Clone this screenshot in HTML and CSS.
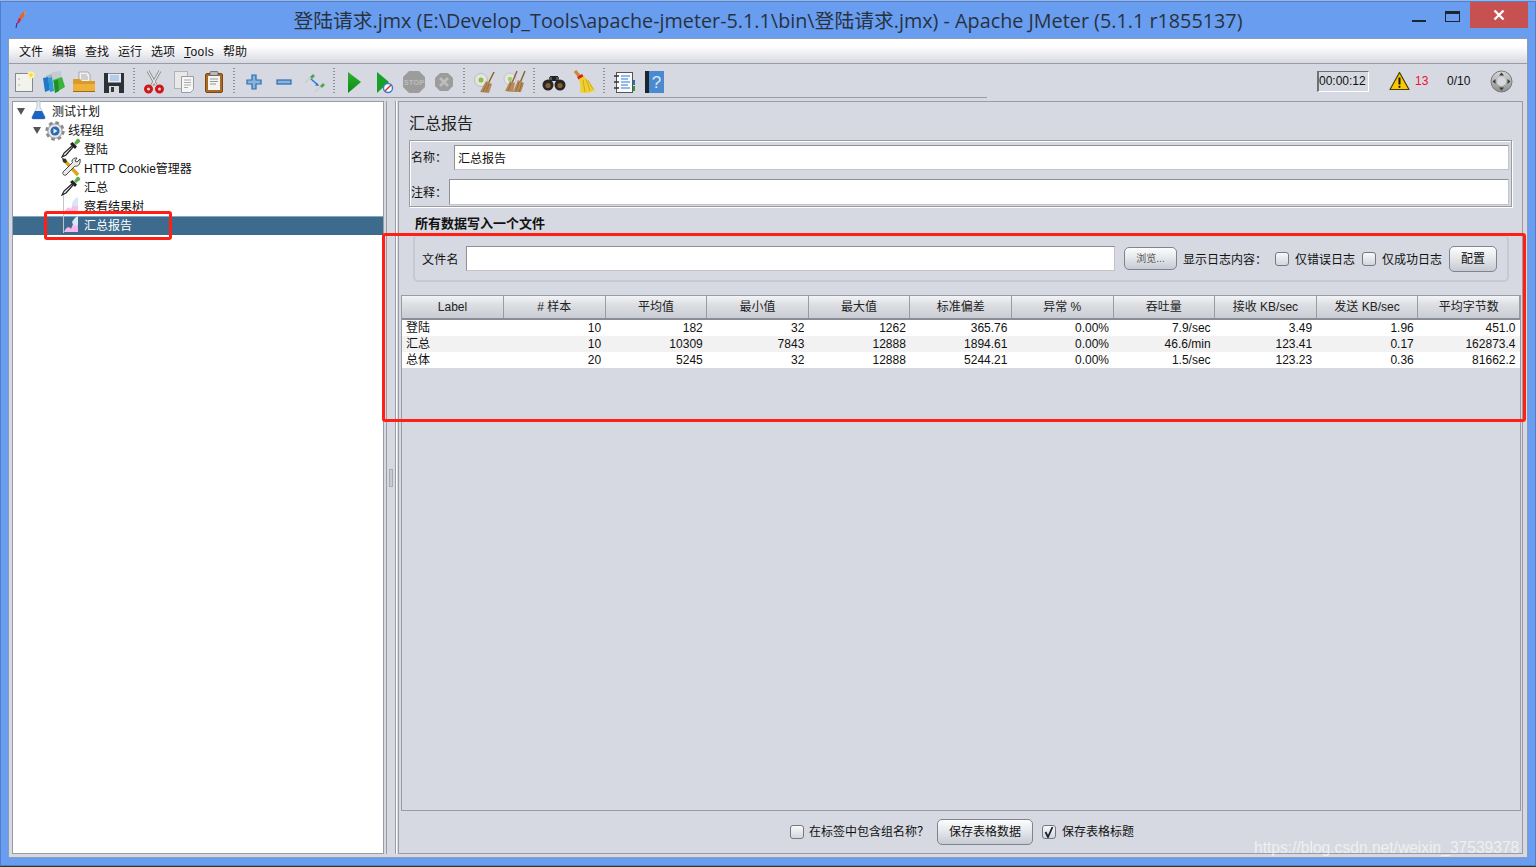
FILE: index.html
```html
<!DOCTYPE html>
<html lang="zh-CN">
<head>
<meta charset="utf-8">
<title>登陆请求.jmx - Apache JMeter</title>
<link rel="stylesheet" href="styles.css">
</head>
<body>
<div class="desktop">
  <div class="window">
    <header class="titlebar">
      <svg class="app-icon" width="14" height="20" viewBox="0 0 14 20"><path d="M12 1C8 2 5 6 4 11l3-1c2-2 4-5 5-9z" fill="#e8622a"/><path d="M5 8c-1 2-2 4-2 6l3-2 1-3z" fill="#c22a5c"/><path d="M3 13l-1 5" stroke="#5a2a7a" stroke-width="1.2"/><path d="M11 1l1 1-2 4z" fill="#f5b030"/></svg>
      <div class="title">登陆请求.jmx (E:\Develop_Tools\apache-jmeter-5.1.1\bin\登陆请求.jmx) - Apache JMeter (5.1.1 r1855137)</div>
      <div class="controls">
        <span class="ctl-min"></span>
        <span class="ctl-max"></span>
        <span class="ctl-close"><svg width="12" height="12" viewBox="0 0 12 12"><path d="M1.5 1.5l9 9M10.500 1.500l-9 9" stroke="#fff" stroke-width="2.400"/></svg></span>
      </div>
    </header>
    <div class="client">
      <nav class="menubar">
        <span>文件</span><span>编辑</span><span>查找</span><span>运行</span><span>选项</span><span class="menu-latin"><u>T</u>ools</span><span>帮助</span>
      </nav>
      <div class="toolbar">
        <div class="tools">
          <button class="tool"><svg width="24" height="24" viewBox="0 0 24 24"><rect x="3.500" y="3.500" width="17" height="18" fill="#f3f3ee" stroke="#85888a"/><circle cx="7" cy="9" r=".7" fill="#999"/><circle cx="7" cy="15" r=".7" fill="#999"/><circle cx="19" cy="5" r="3.500" fill="#fff3a0"/><circle cx="19" cy="5" r="1.800" fill="#f8d848"/></svg></button>
          <button class="tool"><svg width="24" height="24" viewBox="0 0 24 24"><path d="M4 6l8-3v8l-8 3z" fill="#a8b4bc"/><path d="M10 2l9-1 1 10-10 2z" fill="#c4ccd2"/><path d="M1 8l5-1 2 13-5 2z" fill="#1f78c8"/><path d="M6 8l4-1 2 14-4 1z" fill="#2a9ad8"/><path d="M11 10l9-3 3 10-10 6z" fill="#3cb43c"/><path d="M12 11l4-1.500 1 11.500-4 2z" fill="#1e8e2a"/></svg></button>
          <button class="tool"><svg width="24" height="24" viewBox="0 0 24 24"><path d="M7 2h9l2 3v9H7z" fill="#f2f2f2" stroke="#9a9a9a" stroke-width=".8"/><path d="M9 5h6M9 7h7M9 9h7" stroke="#aaa"/><path d="M1 9h7l2 2h13v10a1 1 0 0 1-1 1H2a1 1 0 0 1-1-1z" fill="#d99a28"/><path d="M1 14h22v7a1 1 0 0 1-1 1H2a1 1 0 0 1-1-1z" fill="#eeb23c"/><path d="M1 21h22v1H1z" fill="#9c6a18"/></svg></button>
          <button class="tool"><svg width="24" height="24" viewBox="0 0 24 24"><path d="M2 3h20v20H2z" fill="#2d3236"/><rect x="6" y="3.500" width="13" height="9" fill="#e2eaf3"/><path d="M8 6h9M8 8h9M8 10h9" stroke="#8db0d4"/><rect x="7" y="16" width="10" height="7" fill="#d8dadc"/><rect x="9" y="17" width="3" height="5" fill="#34383c"/></svg></button>
          <span class="tool-sep"></span>
          <button class="tool"><svg width="24" height="24" viewBox="0 0 24 24"><path d="M6 1l8 14M18 1l-8 14" stroke="#8d8d8d" stroke-width="3"/><path d="M6 1l8 14M18 1l-8 14" stroke="#ededed" stroke-width="1.200"/><circle cx="6.500" cy="19" r="3" fill="none" stroke="#d01818" stroke-width="3"/><circle cx="17.500" cy="19" r="3" fill="none" stroke="#d01818" stroke-width="3"/></svg></button>
          <button class="tool"><svg width="24" height="24" viewBox="0 0 24 24"><rect x="2.500" y="1.500" width="13" height="17" fill="#e8e8e8" stroke="#b4b4b4"/><path d="M9.500 6.500h12v13l-3 3h-9z" fill="#f6f6f6" stroke="#9c9c9c"/><path d="M12 10h7M12 12.500h7M12 15h7M12 17.500h4" stroke="#aaa"/></svg></button>
          <button class="tool"><svg width="24" height="24" viewBox="0 0 24 24"><rect x="3.500" y="3.500" width="17" height="19" rx="1.500" fill="#a86a24" stroke="#7a4a14"/><rect x="6" y="6" width="12" height="14" fill="#f4f4f0"/><path d="M8 9h8M8 11.500h8M8 14h6" stroke="#999"/><rect x="8" y="1.500" width="8" height="4" rx="1" fill="#b8b8b8" stroke="#555" stroke-width=".7"/></svg></button>
          <span class="tool-sep"></span>
          <button class="tool"><svg width="24" height="24" viewBox="0 0 24 24"><path d="M10 5h4v5h5v4h-5v5h-4v-5H5v-4h5z" fill="#8ab4dc" stroke="#2a6cb0" stroke-width="1.200"/></svg></button>
          <button class="tool"><svg width="24" height="24" viewBox="0 0 24 24"><rect x="5" y="10" width="14" height="4" fill="#8ab4dc" stroke="#2a6cb0" stroke-width="1.200"/></svg></button>
          <button class="tool"><svg width="24" height="24" viewBox="0 0 24 24"><path d="M3 13l7-7M13 22l7-7" stroke="#d0d0d0" stroke-width="2"/><path d="M8 7l3-3 2 2-3 3z" fill="#58a058"/><path d="M18 16l3-3 2 2-3 3z" fill="#58a058"/><path d="M9 9l7 6" stroke="#2a78d8" stroke-width="1.500"/><path d="M17 16l-4-.500 2-2.500z" fill="#2a78d8"/></svg></button>
          <span class="tool-sep"></span>
          <button class="tool"><svg width="24" height="24" viewBox="0 0 24 24"><path d="M6 2l13 10L6 23z" fill="url(#playA)"/><defs><linearGradient id="playA" x1="0" y1="0" x2="0" y2="1"><stop offset="0" stop-color="#30b030"/><stop offset="1" stop-color="#0c8a18"/></linearGradient></defs></svg></button>
          <button class="tool"><svg width="24" height="24" viewBox="0 0 24 24"><path d="M5 2l12 10L5 23z" fill="#18a028"/><circle cx="16" cy="18" r="4.500" fill="#fff" stroke="#3a7ad0" stroke-width="1.400"/><path d="M13 21l6-6" stroke="#d03030" stroke-width="1.400"/></svg></button>
          <button class="tool"><svg width="24" height="24" viewBox="0 0 24 24"><path d="M7 1h10l6 6v10l-6 6H7l-6-6V7z" fill="#9c9c9c"/><text class="stop-text" x="12" y="15">STOP</text></svg></button>
          <button class="tool"><svg width="24" height="24" viewBox="0 0 24 24"><path d="M8 3h8l5 5v8l-5 5H8l-5-5V8z" fill="#9c9c9c"/><path d="M8 8l8 8M16 8l-8 8" stroke="#bdbdbd" stroke-width="2.600"/></svg></button>
          <span class="tool-sep"></span>
          <button class="tool"><svg width="24" height="24" viewBox="0 0 24 24"><circle cx="9" cy="10" r="6.500" fill="#e4e4e2" stroke="#bcbcbc"/><circle cx="9" cy="10" r="2.500" fill="#84c440"/><path d="M22 2l-6 12" stroke="#8a6438" stroke-width="1.600"/><path d="M14 11l6 3-3 9-9-1z" fill="#b48a5a"/><path d="M11 22l4-9M14 22l3-8" stroke="#8a6438" stroke-width=".8"/></svg></button>
          <button class="tool"><svg width="24" height="24" viewBox="0 0 24 24"><circle cx="8" cy="9" r="6" fill="#e4e4e2" stroke="#c4c4c4"/><circle cx="8" cy="9" r="2.200" fill="#a4d070"/><path d="M15 1l-5 12M23 1l-5 12" stroke="#8a6438" stroke-width="1.500"/><path d="M8 11l5 2-2 9-8-1z" fill="#b48a5a"/><path d="M16 10l6 3-3 9-8 0z" fill="#b48a5a"/><path d="M14 21l3-9M17 22l3-9M6 21l3-8" stroke="#8a6438" stroke-width=".8"/></svg></button>
          <span class="tool-sep"></span>
          <button class="tool"><svg width="24" height="24" viewBox="0 0 24 24"><rect x="8" y="6" width="8" height="5" fill="#222"/><path d="M7 7h3v3H7zM14 7h3v3h-3z" fill="#555"/><circle cx="6" cy="15" r="5.500" fill="#262626"/><circle cx="18" cy="15" r="5.500" fill="#262626"/><circle cx="6" cy="15.500" r="2.600" fill="#8a5a30"/><circle cx="18" cy="15.500" r="2.600" fill="#8a5a30"/></svg></button>
          <button class="tool"><svg width="24" height="24" viewBox="0 0 24 24"><path d="M3 1l5 6" stroke="#c88a3a" stroke-width="3.400"/><path d="M5 7l5-3 2 3-5 3z" fill="#d82020"/><path d="M7 9l5-3 11 14c-5 3-10 4-15 2 1-4 0-9-1-13z" fill="#f0d030"/><path d="M11 10l2 12M14 9l4 12M16 10l5 9" stroke="#c0a018" stroke-width=".8"/></svg></button>
          <span class="tool-sep"></span>
          <button class="tool"><svg width="24" height="24" viewBox="0 0 24 24"><rect x="4.500" y="2.500" width="16" height="20" fill="#fafafa" stroke="#555"/><path d="M2 6h5M2 12h5M2 18h5" stroke="#333" stroke-width="1.500"/><path d="M9 6h9M9 9h7M9 12h9M9 15h7M9 18h9" stroke="#2a7ae0" stroke-width="1.200"/><path d="M21 10h2v5h-2z" fill="#2a70c0"/><path d="M21 16h2v5h-2z" fill="#2a9a3a"/></svg></button>
          <button class="tool"><svg width="24" height="24" viewBox="0 0 24 24"><path d="M3 1h19v22H3z" fill="#4c8ad0"/><path d="M3 1h4v22H3z" fill="#1c2630"/><text class="help-text" x="14.500" y="18">?</text></svg></button>
        </div>
        <div class="status">
          <span class="timer">00:00:12</span>
          <svg class="warn" width="21" height="20" viewBox="0 0 21 20"><path d="M10.500 1.500L20 18.500H1z" fill="#f8c800" stroke="#4a3c00" stroke-width="1.200" stroke-linejoin="round"/><path d="M10.500 6.500v7" stroke="#111" stroke-width="2"/><circle cx="10.500" cy="15.800" r="1.100" fill="#111"/></svg>
          <span class="warn-count">13</span>
          <span class="threads">0/10</span>
          <svg class="expand" width="23" height="23" viewBox="0 0 23 23"><defs><linearGradient id="ball" x1="0" y1="0" x2="0" y2="1"><stop offset="0" stop-color="#d8d8d8"/><stop offset="1" stop-color="#8e8e8e"/></linearGradient></defs><circle cx="11.500" cy="11.500" r="10.500" fill="url(#ball)" stroke="#777"/><circle cx="11.500" cy="11.500" r="4.500" fill="#d6d9e0"/><path d="M11.500 2.500l2.500 3h-5zM11.500 20.500l2.500-3h-5zM2.500 11.500l3 2.500v-5zM20.500 11.500l-3 2.500v-5z" fill="#3c3c3c"/></svg>
        </div>
      </div>
      <main class="main">
        <aside class="tree">
          <div class="node depth-0"><i class="twisty"></i><svg class="node-icon" width="16" height="20" viewBox="0 0 16 20"><path d="M6 1h3v6l5 10c.4 1-.2 2-1 2H2c-.8 0-1.400-1-1-2l5-10z" fill="#e8ecf2" stroke="#aab2bc" stroke-width=".7"/><path d="M4 11h7l3 6c.4 1-.2 2-1 2H2c-.8 0-1.400-1-1-2z" fill="#1c64c0"/></svg><span>测试计划</span></div>
          <div class="node depth-1"><i class="twisty"></i><svg class="node-icon" width="20" height="20" viewBox="0 0 20 20"><circle cx="10" cy="10" r="8" fill="#cfcfcf" stroke="#8c8c8c" stroke-width="3.400" stroke-dasharray="3.500 2.800"/><circle cx="10" cy="10" r="7" fill="#e8e8e8" stroke="#8c8c8c" stroke-width=".6"/><circle cx="10" cy="10" r="4.500" fill="#2a68b0"/><path d="M8.500 7.500l4 2.500-4 2.500z" fill="#e8f0fa"/></svg><span>线程组</span></div>
          <div class="node depth-2"><svg class="node-icon" width="20" height="20" viewBox="0 0 20 20"><path d="M12 7L3 15l-2 4 4-2 8-9z" fill="#ececec" stroke="#222" stroke-width="1.200"/><path d="M9 6l5 5 2-2.500-4.500-4.500z" fill="#222"/><path d="M13 5l3-4c1.500-1 4 1.500 3 3l-4 3z" fill="#5cb04c"/></svg><span>登陆</span></div>
          <div class="node depth-2"><svg class="node-icon" width="20" height="20" viewBox="0 0 20 20"><path d="M3 3l14 15" stroke="#d8a818" stroke-width="3.400"/><path d="M1 1l4 1 1 3-2 1-2-1z" fill="#333"/><path d="M19 2l-3 3-2-1 2-3c-2-.500-5 1-5 3 0 .800 0 1 .5 1.500L2 15c-1 2 1 4 3 3l9-9c2 1 6-1 5-7z" fill="#e8e8e8" stroke="#333" stroke-width=".9"/></svg><span>HTTP Cookie管理器</span></div>
          <div class="node depth-2"><svg class="node-icon" width="20" height="20" viewBox="0 0 20 20"><path d="M12 7L3 15l-2 4 4-2 8-9z" fill="#ececec" stroke="#222" stroke-width="1.200"/><path d="M9 6l5 5 2-2.500-4.500-4.500z" fill="#222"/><path d="M13 5l3-4c1.500-1 4 1.500 3 3l-4 3z" fill="#5cb04c"/></svg><span>汇总</span></div>
          <div class="node depth-2"><svg class="node-icon" width="20" height="20" viewBox="0 0 20 20"><path d="M2.500 0v19h16" fill="none" stroke="#c4c4c4"/><path d="M3 18c2-5 5-7 7-4 2-6 4-9 7-10v14z" fill="#f4c0e8"/><path d="M11 8c2-3 3-5 6-6v8c-2 3-5 2-6-2z" fill="#d8e6f6"/></svg><span>察看结果树</span></div>
          <div class="node depth-2 selected"><svg class="node-icon" width="20" height="20" viewBox="0 0 20 20"><path d="M2.500 0v19" fill="none" stroke="#c4c4c4"/><path d="M3 18c2-5 5-6 7-3 2-6 4-8 7-9v12z" fill="#f6b8ec"/><path d="M11 8c2-3 3-5 6-6v8c-2 3-5 2-6-2z" fill="#d8e6f6"/></svg><span>汇总报告</span></div>
        </aside>
        <div class="splitter"><i></i></div>
        <section class="panel">
          <h1 class="panel-title">汇总报告</h1>
          <div class="name-box">
            <label class="field"><span class="lbl-name">名称：</span><input class="text" value="汇总报告"></label>
            <label class="field field-note"><span class="lbl-note">注释：</span><input class="text"></label>
          </div>
          <h2 class="section-title">所有数据写入一个文件</h2>
          <div class="file-box">
            <span class="file-label">文件名</span>
            <input class="text file-input">
            <button class="btn btn-browse">浏览...</button>
            <span class="log-label">显示日志内容：</span>
            <span class="check first"></span><span class="check-text">仅错误日志</span>
            <span class="check second"></span><span class="check-text">仅成功日志</span>
            <button class="btn btn-config">配置</button>
          </div>
          <div class="results">
            <table class="grid">
              <thead>
                <tr><th>Label</th><th># 样本</th><th>平均值</th><th>最小值</th><th>最大值</th><th>标准偏差</th><th>异常 %</th><th>吞吐量</th><th>接收 KB/sec</th><th>发送 KB/sec</th><th>平均字节数</th></tr>
              </thead>
              <tbody>
                <tr><td>登陆</td><td>10</td><td>182</td><td>32</td><td>1262</td><td>365.76</td><td>0.00%</td><td>7.9/sec</td><td>3.49</td><td>1.96</td><td>451.0</td></tr>
                <tr><td>汇总</td><td>10</td><td>10309</td><td>7843</td><td>12888</td><td>1894.61</td><td>0.00%</td><td>46.6/min</td><td>123.41</td><td>0.17</td><td>162873.4</td></tr>
                <tr><td>总体</td><td>20</td><td>5245</td><td>32</td><td>12888</td><td>5244.21</td><td>0.00%</td><td>1.5/sec</td><td>123.23</td><td>0.36</td><td>81662.2</td></tr>
              </tbody>
            </table>
          </div>
          <div class="save-bar">
            <span class="check"></span><span class="save-text group-name">在标签中包含组名称？</span>
            <button class="btn btn-save">保存表格数据</button>
            <span class="check checked"><svg width="12" height="12" viewBox="0 0 12 12"><path d="M2.500 6l2.500 5L9.500 1" fill="none" stroke="#1a2430" stroke-width="1.800"/></svg></span><span class="save-text save-head">保存表格标题</span>
          </div>
        </section>
      </main>
    </div>
  </div>
  <div class="mark mark-node"></div>
  <div class="mark mark-results"></div>
  <div class="watermark">https://blog.csdn.net/weixin_37539378</div>
</div>
</body>
</html>
```
FILE: styles.css
```css
* { box-sizing: border-box; }
html, body { margin: 0; height: 100%; overflow: hidden; }
body { font: 12px/16px "Liberation Sans", "Noto Sans CJK SC", sans-serif; color: #111; }
.desktop {
  position: relative;
  width: 1536px;
  height: 867px;
  padding: 1px 0 1px;
  display: flex;
  background: linear-gradient(#9ab6dc 0 1px, #26401c 1px);
}
.window {
  flex: 1;
  min-width: 0;
  display: flex;
  flex-direction: column;
  background: #699df0;
  border: 1px solid #4f7fce;
  padding: 0 7px 7px;
}
.titlebar {
  height: 36px;
  flex: none;
  display: grid;
  grid-template-columns: 1fr auto 1fr;
  color: #26313f;
}
.app-icon { margin: 8px 0 0 6px; }
.title {
  font: 19.800px/37px "Open Sans", "Noto Sans CJK SC", sans-serif;
  white-space: nowrap;
  color: #28323f;
}
.controls { display: flex; justify-content: flex-end; align-items: flex-start; }
.ctl-min { width: 14px; height: 2px; margin: 18px 19px 0 0; background: #1c2430; }
.ctl-max { width: 15px; height: 11px; margin: 9px 10px 0 0; border: 1px solid #1c2430; border-top-width: 3px; }
.ctl-close { width: 58px; height: 26px; display: flex; align-items: center; justify-content: center; background: #c75050; }
.client {
  flex: 1;
  min-height: 0;
  display: flex;
  flex-direction: column;
  background: #d6d9e1;
  border: 1px solid #8a9cb8;
}
.menubar {
  height: 25px;
  flex: none;
  display: flex;
  align-items: center;
  gap: 9px;
  padding: 1px 0 0 10px;
  background: linear-gradient(#fff 0, #fff 30%, #d6d9e1 100%);
  border-bottom: 1px solid #9a9ca5;
}
.menu-latin { letter-spacing: .4px; }
.toolbar { height: 34px; flex: none; display: flex; justify-content: space-between; }
.tools {
  width: 978px;
  height: 34px;
  display: flex;
  align-items: center;
  border-bottom: 1px solid #9a9ca5;
}
.tool {
  width: 30px;
  height: 33px;
  flex: none;
  padding: 2px 0 0;
  border: 0;
  background: none;
  display: flex;
  align-items: center;
  justify-content: center;
}
.tool-sep { width: 10px; height: 27px; flex: none; background: radial-gradient(circle, #8c8e94 0 .7px, transparent 1px) center top / 2px 3px repeat-y; }
.stop-text { font: bold 7.500px "Liberation Sans", sans-serif; fill: #bcbcbc; text-anchor: middle; }
.help-text { font: 17px "Liberation Sans", sans-serif; fill: #d8e8f8; text-anchor: middle; }
.status { display: flex; align-items: center; height: 33px; padding-top: 1px; }
.timer {
  width: 52px;
  height: 21px;
  margin-right: 20px;
  border: 1px solid #fff;
  border-top-color: #6e7074;
  border-left: 2px solid #6e7074;
  line-height: 19px;
  color: #111;
  white-space: nowrap;
  overflow: hidden;
}
.warn { margin-right: 5px; }
.warn-count { width: 32px; color: #f01030; }
.threads { width: 43px; }
.expand { margin-right: 14px; }
.main { flex: 1; min-height: 0; display: flex; padding: 3px 4px 3px 3px; }
.tree {
  width: 372px;
  flex: none;
  background: #fff;
  border: 1px solid #9a9ca5;
}
.node { height: 19px; display: flex; align-items: center; white-space: nowrap; }
.depth-0 { padding-left: 4px; }
.depth-1 { padding-left: 20px; }
.depth-2 { padding-left: 48px; }
.twisty { width: 0; height: 0; flex: none; border: 4px solid transparent; border-top: 7px solid #555; border-bottom: 0; }
.depth-0 .node-icon { margin: -3px 5px 0 6px; }
.depth-1 .node-icon { margin: 0 3px 0 4px; }
.depth-2 .node-icon { margin: -3px 3px 0 0; }
.selected { background: #3c6b8e; color: #fff; box-shadow: inset 0 1px 0 #86a6c0; }
.splitter { width: 14px; flex: none; position: relative; display: flex; align-items: center; justify-content: center; }
.splitter::before, .splitter::after { content: ""; position: absolute; top: 0; bottom: 0; width: 1px; background: #9a9ca5; }
.splitter::before { left: 2px; }
.splitter::after { right: 2px; box-shadow: 1px 0 0 #fff; }
.splitter i { width: 4px; height: 18px; border: 1px solid #a8abb2; background: #c8cbd2; }
.panel {
  flex: 1;
  min-width: 0;
  display: flex;
  flex-direction: column;
  border: 1px solid #9a9ca5;
}
.panel-title { margin: 12px 0 6px 10px; font: 16px/20px "Liberation Sans", "Noto Sans CJK SC", sans-serif; color: #222; }
.name-box {
  height: 67px;
  margin: 0 10px;
  padding: 4px 2px 0 1px;
  flex: none;
  border: 1px solid #9a9ca5;
  box-shadow: 1px 1px 0 #fff, inset 1px 1px 0 #fff;
}
.field { display: flex; align-items: center; height: 25px; }
.field-note { height: 26px; margin-top: 9px; }
.lbl-name { width: 43px; flex: none; }
.lbl-note { width: 38px; flex: none; padding-top: 2px; }
.text {
  flex: 1;
  min-width: 0;
  height: 100%;
  padding: 0 3px;
  font: inherit;
  color: #111;
  background: #fff;
  border: 1px solid #c2c4ca;
  border-top: 1px solid #8e9096;
  border-left: 1px solid #8e9096;
  border-radius: 0;
  outline: 0;
}
.section-title { height: 16px; margin: 9px 0 3px 16px; font: bold 13px/16px "Liberation Sans", "Noto Sans CJK SC", sans-serif; }
.file-box {
  height: 47px;
  margin: 0 13px 13px 14px;
  padding: 0 0 0 7px;
  flex: none;
  display: flex;
  align-items: center;
  border: 2px solid #c6c9d0;
  border-top-color: #cfd2d9;
  border-radius: 5px;
  white-space: nowrap;
}
.file-label, .log-label, .check-text { padding-top: 2px; }
.file-label { width: 37px; letter-spacing: .3px; }
.file-input { flex: none; width: 649px; height: 25px; margin-left: 7px; }
.btn {
  padding: 0;
  font: inherit;
  color: #111;
  background: linear-gradient(#fdfdfe, #e6e8ec 45%, #c6cad2);
  border: 1px solid #80848c;
  border-radius: 5px;
}
.btn-browse { width: 53px; height: 23px; margin-left: 9px; font-size: 10px; color: #555; }
.log-label { margin-left: 6px; width: 92px; }
.check {
  width: 14px;
  height: 14px;
  flex: none;
  display: inline-flex;
  align-items: center;
  justify-content: center;
  background: linear-gradient(#f8f9fa, #d2d6dd);
  border: 1px solid #74787f;
  border-radius: 3px;
}
.check.second { margin-left: 7px; }
.check-text { margin-left: 6px; width: 60px; }
.btn-config { width: 48px; height: 26px; margin-left: 7px; }
.results { flex: 1; min-height: 0; margin: 0 1px 0 2px; border: 1px solid #9a9ca5; }
.grid { width: 100%; table-layout: fixed; border-collapse: collapse; }
.grid th {
  height: 23px;
  padding: 0;
  font-weight: normal;
  color: #222;
  background: linear-gradient(#f3f4f6, #dcdee3 40%, #c9ccd3);
  border-right: 1px solid #9a9ca5;
  border-bottom: 2px solid #8a8d95;
}
.grid td { height: 16px; padding: 0 4px; text-align: right; line-height: 16px; white-space: nowrap; }
.grid td:first-child { text-align: left; }
.grid tbody tr { background: #fff; }
.grid tbody tr:nth-child(2) { background: #f2f2f2; }
.save-bar { height: 42px; flex: none; display: flex; align-items: center; justify-content: center; padding-left: 3px; white-space: nowrap; }
.group-name { margin-left: 5px; width: 117px; }
.save-head { margin-left: 6px; width: 72px; }
.btn-save { width: 96px; height: 26px; margin: 0 9px 0 11px; }
.mark { position: absolute; border: 3px solid #ff2015; border-radius: 3px; pointer-events: none; }
.mark-node { left: 44px; top: 211px; width: 128px; height: 29px; }
.mark-results { left: 382px; top: 233px; width: 1144px; height: 189px; }
.watermark { position: absolute; left: 1254px; top: 838px; font: 15.600px/20px "Liberation Sans", sans-serif; color: rgba(255,255,255,.62); white-space: nowrap; }
```
